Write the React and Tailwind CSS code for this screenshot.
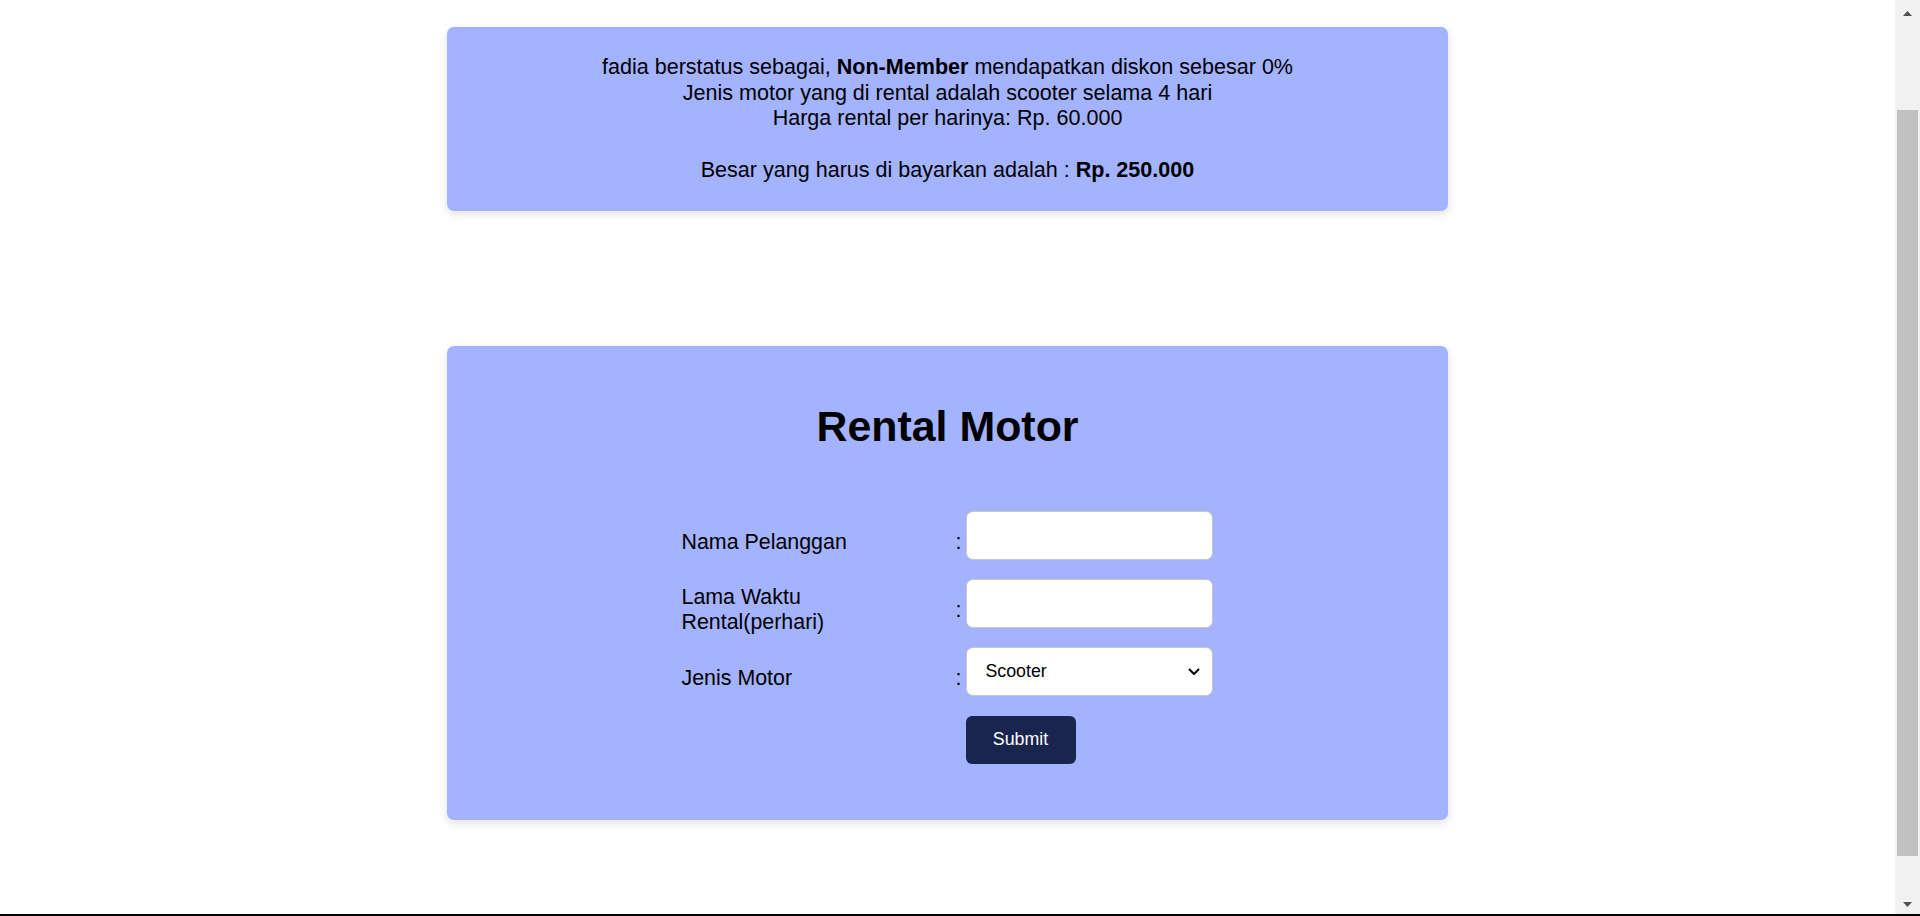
import { useState } from 'react';

const font = "font-['Liberation_Sans',Arial,sans-serif]";

// Fake browser scrollbar on the right edge
function Scrollbar() {
  return (
    <aside className="w-[25px] bg-[#f1f1f1] flex flex-col shrink-0">
      <div className="h-[26px] flex items-center justify-center">
        <svg width="9" height="5" viewBox="0 0 9 5">
          <polygon points="0,5 4.5,0 9,5" fill="#505050" />
        </svg>
      </div>
      <div className="mt-[84px] mx-[2px] h-[746px] bg-[#c1c1c1]" />
      <div className="flex-1" />
      <div className="h-[20px] flex items-center justify-center">
        <svg width="9" height="5" viewBox="0 0 9 5">
          <polygon points="0,0 9,0 4.5,5" fill="#505050" />
        </svg>
      </div>
    </aside>
  );
}

export default function App() {
  const [nama, setNama] = useState('');
  const [lama, setLama] = useState('');
  const [jenis, setJenis] = useState('scooter');

  const inputClass =
    'w-[247px] h-[49px] mb-[14px] border border-[#c6c6c6] rounded-[7px] bg-white px-[19px] text-[17.77px] text-black outline-none';

  return (
    <div className={`h-[916px] flex flex-col bg-white text-black ${font}`}>
      <div className="flex-1 flex min-h-0">
        <main className="flex-1 overflow-hidden pt-[27px]">
          {/* Result */}
          <div className="w-[1001px] mx-auto bg-indigo-300 rounded-[7px] shadow-[0_3px_10px_rgba(0,0,0,0.12)] pt-[27px] pb-[28px] text-center text-[21.55px] leading-[25.7px]">
            fadia berstatus sebagai, <b>Non-Member</b> mendapatkan diskon sebesar 0%
            <br />
            Jenis motor yang di rental adalah scooter selama 4 hari
            <br />
            Harga rental per harinya: Rp. 60.000
            <br />
            <br />
            Besar yang harus di bayarkan adalah : <b>Rp. 250.000</b>
          </div>

          {/* Form */}
          <div className="w-[1001px] mx-auto mt-[135px] bg-indigo-300 rounded-[7px] shadow-[0_3px_10px_rgba(0,0,0,0.12)] pt-[56px] pb-[56px]">
            <h1 className="text-center text-[42.9px] leading-[49px] font-bold">Rental Motor</h1>

            <form
              onSubmit={(e) => e.preventDefault()}
              className="mt-[60px] mx-auto w-[532px] grid grid-cols-[248px_36px_248px] gap-y-[5px] items-center text-[21.4px] leading-[25px]"
            >
              <div>Nama Pelanggan</div>
              <div className="text-right pr-[4px]">:</div>
              <input className={inputClass} value={nama} onChange={(e) => setNama(e.target.value)} />

              <div>Lama Waktu Rental(perhari)</div>
              <div className="text-right pr-[4px]">:</div>
              <input className={inputClass} value={lama} onChange={(e) => setLama(e.target.value)} />

              <div>Jenis Motor</div>
              <div className="text-right pr-[4px]">:</div>
              <div className="relative w-[247px] h-[49px] mb-[14px]">
                <select
                  value={jenis}
                  onChange={(e) => setJenis(e.target.value)}
                  className="appearance-none w-full h-full border border-[#c6c6c6] rounded-[7px] bg-white pl-[19px] text-[17.77px] text-black outline-none"
                >
                  <option value="scooter">Scooter</option>
                  <option value="sport">Sport</option>
                  <option value="cross">Cross</option>
                </select>
                <svg
                  className="absolute right-[13px] top-[21px] pointer-events-none"
                  width="12"
                  height="7"
                  viewBox="0 0 12 7"
                >
                  <polyline points="1,1 6,6 11,1" fill="none" stroke="#000" strokeWidth="2" />
                </svg>
              </div>

              <div />
              <div />
              <button
                type="submit"
                className="self-start mt-[1px] w-[110px] h-[48px] rounded-[6px] bg-[#19244f] text-white text-[17.77px]"
              >
                Submit
              </button>
            </form>
          </div>
        </main>
        <Scrollbar />
      </div>
      <div className="h-[2px] bg-black" />
    </div>
  );
}
